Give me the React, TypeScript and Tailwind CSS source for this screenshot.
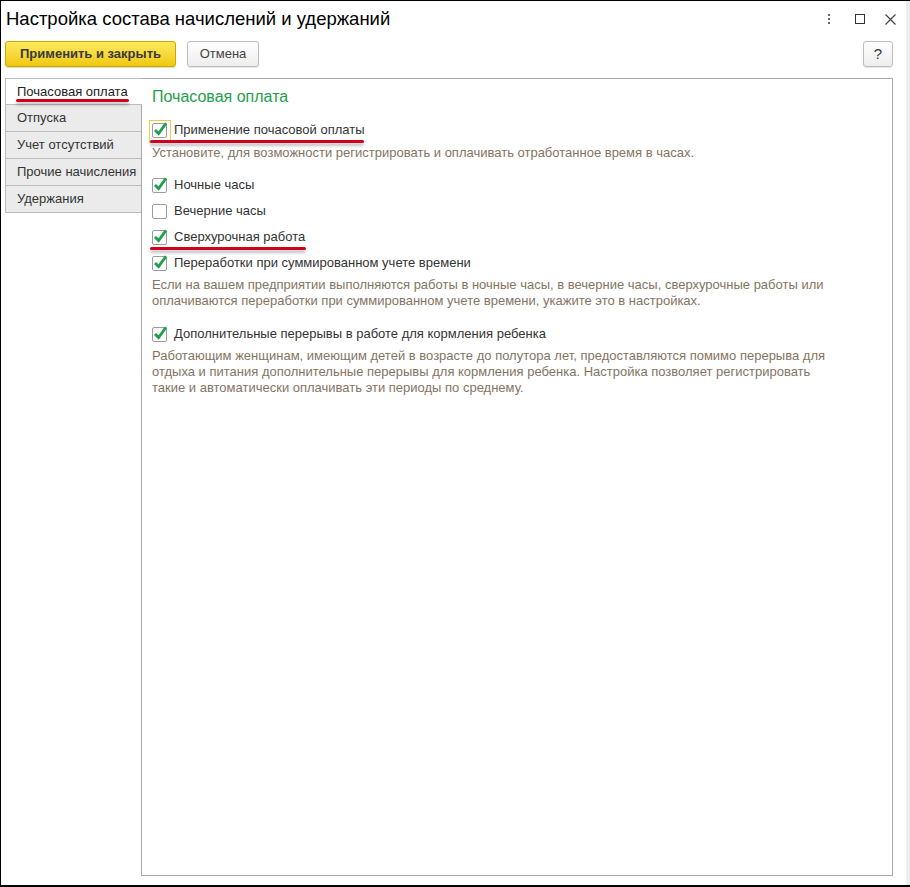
import type { ReactNode } from 'react'

const font = { fontFamily: '"Liberation Sans", Arial, sans-serif' }

function CheckBox({ checked, focused }: { checked: boolean; focused?: boolean }) {
  return (
    <span className="relative inline-flex h-[15px] w-[15px] shrink-0">
      {focused && (
        <span className="absolute -left-[3px] -top-[3px] h-[23px] w-[22px] border border-[#f2c84b]" />
      )}
      <span className="absolute inset-0 rounded-[2px] border border-[#9c9c9c] bg-white" />
      {checked && (
        <svg className="absolute -top-[2px] left-[1px]" width="15" height="16" viewBox="0 0 15 16">
          <path d="M2 9 L5.6 12.6 L13 2.2" fill="none" stroke="#1ea04a" strokeWidth="2.8" strokeLinejoin="miter" />
        </svg>
      )}
    </span>
  )
}

function Row({ checked, focused, children, mark }: { checked: boolean; focused?: boolean; children: ReactNode; mark?: string }) {
  return (
    <div className="relative flex h-[26px] items-center gap-[7px]">
      <CheckBox checked={checked} focused={focused} />
      <span className="text-[13px] text-[#333333]">{children}</span>
      {mark && <span className={`absolute -left-[2px] top-[23px] h-[3px] rounded-full bg-[#d0021b] shadow-[0_3px_3px_rgba(0,0,0,0.25)] ${mark}`} />}
    </div>
  )
}

function Hint({ children }: { children: ReactNode }) {
  return <div className="whitespace-nowrap text-[13px] leading-[16px] text-[#85745f]">{children}</div>
}

const tabs = ['Отпуска', 'Учет отсутствий', 'Прочие начисления', 'Удержания']

export default function App() {
  return (
    <div style={font} className="flex h-[887px] w-[910px] flex-col border-l border-t border-b-2 border-black bg-white">
      <div className="flex border-r-[4px] border-[#ededed] flex-1 flex-col">
        {/* Title */}
        <div className="flex h-[36px] items-center pl-[5px] pr-[1px]">
          <span className="text-[18.5px] text-black">Настройка состава начислений и удержаний</span>
          <div className="ml-auto flex items-center text-[#555]">
            <span className="flex w-[30px] flex-col items-center gap-[2px]">
              <span className="h-[2px] w-[2px] bg-[#666]" />
              <span className="h-[2px] w-[2px] bg-[#666]" />
              <span className="h-[2px] w-[2px] bg-[#666]" />
            </span>
            <span className="ml-[1px] flex w-[30px] justify-center">
              <span className="h-[10px] w-[10px] border border-[#333]" />
            </span>
            <span className="flex w-[30px] justify-center">
              <svg width="11" height="11" viewBox="0 0 11 11">
                <path d="M0.5 0.5 L10.5 10.5 M10.5 0.5 L0.5 10.5" stroke="#444" strokeWidth="1.2" />
              </svg>
            </span>
          </div>
        </div>

        {/* Toolbar */}
        <div className="mt-[4px] flex h-[26px] items-stretch pl-[4px] pr-[13px]">
          <button className="w-[171px] rounded-[3px] border border-[#c9a900] bg-gradient-to-b from-[#fdea5a] to-[#f0c800] text-[13px] font-bold text-[#3a3a3a] shadow-[0_1px_1px_rgba(0,0,0,0.15)]">
            Применить и закрыть
          </button>
          <button className="ml-[11px] w-[72px] rounded-[3px] border border-[#bdbdbd] bg-gradient-to-b from-white to-[#ededed] text-[13px] text-[#444] shadow-[0_1px_1px_rgba(0,0,0,0.1)]">
            Отмена
          </button>
          <button className="ml-auto w-[30px] rounded-[3px] border border-[#bdbdbd] bg-gradient-to-b from-white to-[#ededed] text-[15px] text-[#333] shadow-[0_1px_1px_rgba(0,0,0,0.1)]">
            ?
          </button>
        </div>

        {/* Body */}
        <div className="mt-[11px] mb-[9px] flex flex-1 pl-[4px] pr-[13px]">
          <div className="relative z-10 flex w-[136px] shrink-0 flex-col">
            <div className="relative -mr-px flex h-[27px] items-center border-y border-l border-[#bcbcbc] bg-white pl-[11px] text-[13px] text-[#222]">
              Почасовая оплата
              <span className="absolute left-[10px] top-[20px] h-[3px] w-[113px] rounded-full bg-[#d0021b] shadow-[0_3px_3px_rgba(0,0,0,0.25)]" />
            </div>
            {tabs.map((t) => (
              <div key={t} className="flex h-[27px] items-center border-b border-l border-[#bcbcbc] bg-[#ebebeb] pl-[11px] text-[13px] text-[#333]">
                {t}
              </div>
            ))}
          </div>

          <div className="flex-1 border border-[#aaaaaa] pl-[10px]">
            <div className="mt-[8px] text-[16px] leading-[20px] text-[#1f9e4a]">Почасовая оплата</div>
            <div className="mt-[10px]">
              <Row checked focused mark="w-[214px]">Применение почасовой оплаты</Row>
            </div>
            <div className="mt-[2px]">
              <Hint>Установите, для возможности регистрировать и оплачивать отработанное время в часах.</Hint>
            </div>
            <div className="mt-[11px]">
              <Row checked>Ночные часы</Row>
              <Row checked={false}>Вечерние часы</Row>
              <Row checked mark="w-[156px]">Сверхурочная работа</Row>
              <Row checked>Переработки при суммированном учете времени</Row>
            </div>
            <div className="mt-[1px]">
              <Hint>Если на вашем предприятии выполняются работы в ночные часы, в вечерние часы, сверхурочные работы или</Hint>
              <Hint>оплачиваются переработки при суммированном учете времени, укажите это в настройках.</Hint>
            </div>
            <div className="mt-[12px]">
              <Row checked>Дополнительные перерывы в работе для кормления ребенка</Row>
            </div>
            <div className="mt-[1px]">
              <Hint>Работающим женщинам, имеющим детей в возрасте до полутора лет, предоставляются помимо перерыва для</Hint>
              <Hint>отдыха и питания дополнительные перерывы для кормления ребенка. Настройка позволяет регистрировать</Hint>
              <Hint>такие и автоматически оплачивать эти периоды по среднему.</Hint>
            </div>
          </div>
        </div>
      </div>
    </div>
  )
}
